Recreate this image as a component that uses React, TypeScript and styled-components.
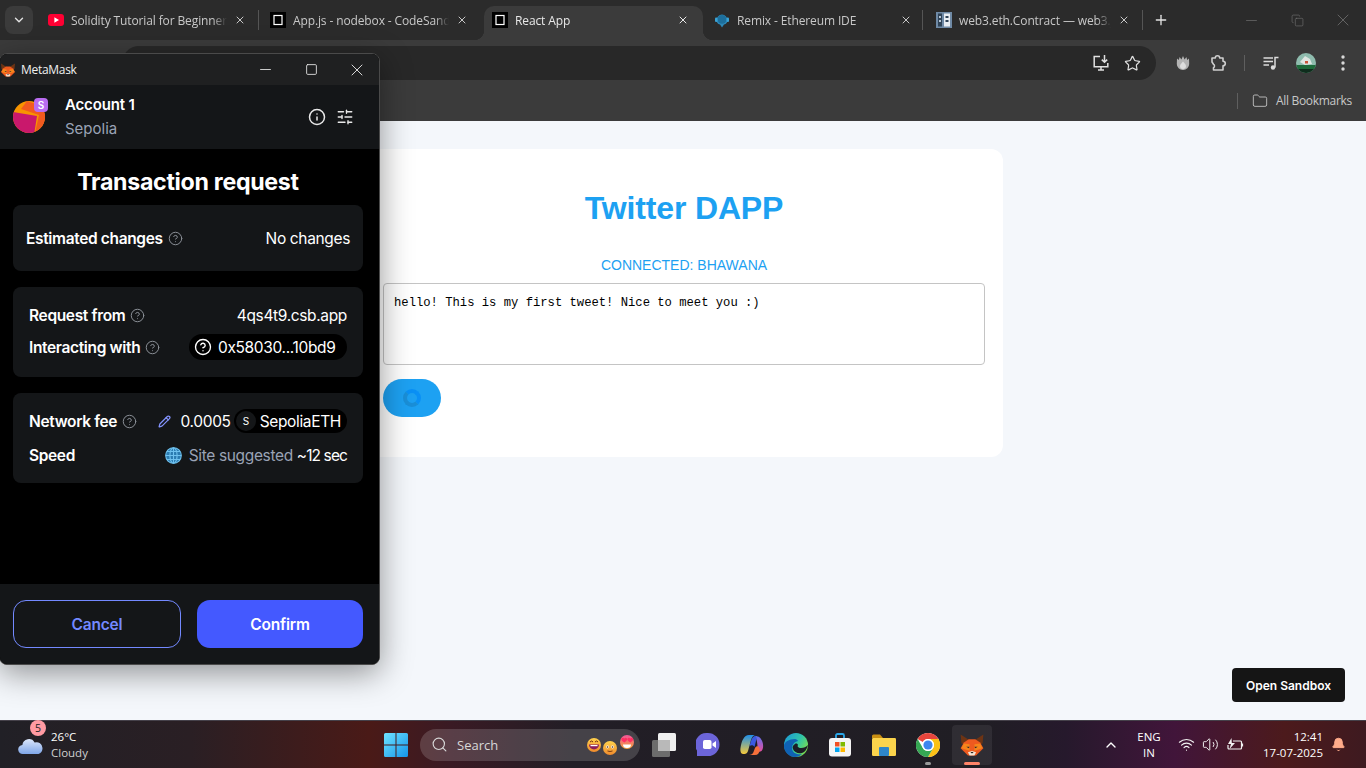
import React from "react";
import styled, { createGlobalStyle } from "styled-components";
import {
  Bell, ChevronDown, ChevronUp, CircleHelp, Copy, Folder, Info, Minus,
  Pencil, Plus, Search, SlidersHorizontal, Square, Star, Volume2, Wifi, X,
} from "lucide-react";

const Global = createGlobalStyle`
  html, body { margin: 0; padding: 0; height: 100%; overflow: hidden; }
  * { box-sizing: border-box; }
`;

const Desktop = styled.div`
  position: relative; width: 1366px; height: 768px; display: flex; flex-direction: column;
  overflow: hidden; font-family: "Open Sans", "Liberation Sans", sans-serif; background: #f4f7fb;
`;

/* ---------- browser chrome ---------- */
const TabStrip = styled.div`
  height: 40px; background: #2b2b2b; display: flex; align-items: flex-end; padding-left: 5px; flex: none;
`;
const TabMenu = styled.div`
  width: 28px; height: 28px; margin: 0 7px 6px 0; border-radius: 8px; background: #3b3b3b; color: #e3e3e3;
  display: flex; align-items: center; justify-content: center;
`;
const Tab = styled.div<{ $active?: boolean; $w?: number; $sep?: number; $ml?: number }>`
  position: relative; height: 34px; width: ${(p) => p.$w ?? 222}px; margin-left: ${(p) => p.$ml ?? 0}px; display: flex; align-items: center;
  gap: 7px; padding: 0 ${(p) => (p.$active ? 14 : 16)}px 6px 8px; font-size: 12px; letter-spacing: -0.12px;
  color: ${(p) => (p.$active ? "#e8e8e8" : "#c8c8c8")};
  background: ${(p) => (p.$active ? "#3b3b3b" : "transparent")};
  border-radius: ${(p) => (p.$active ? "10px 10px 0 0" : "0")};
  &::after {
    content: ""; position: absolute; top: 4px; bottom: 10px; width: 1px; background: #555;
    right: ${(p) => p.$sep ?? 3}px; display: ${(p) => (p.$sep === -1 ? "none" : "block")};
  }
`;
const ActiveFlare = styled.span<{ $side: "left" | "right" }>`
  position: absolute; bottom: 0; width: 10px; height: 10px; ${(p) => p.$side}: -10px;
  background: radial-gradient(circle at ${(p) => (p.$side === "left" ? "0 0" : "100% 0")}, transparent 10px, #3b3b3b 10.5px);
`;
const TabTitle = styled.span`
  flex: 1; min-width: 0; overflow: hidden; white-space: nowrap;
  mask-image: linear-gradient(to right, #000 calc(100% - 14px), transparent);
`;
const PlusButton = styled.div`
  color: #e3e3e3; margin: 0 0 12px 7px; display: flex; width: 16px; height: 16px;
`;
const WindowControls = styled.div`
  margin-left: auto; display: flex; align-self: stretch;
`;
const WindowControl = styled.div`
  width: 46px; display: flex; align-items: center; justify-content: center; color: #6f6f6f;
`;
const Toolbar = styled.div`
  height: 40px; flex: none; background: #3b3b3b; display: flex; align-items: flex-end; padding-left: 122px; color: #dcdcdc;
`;
const AddressBar = styled.div`
  width: 1034px; height: 34px; border-radius: 17px; background: #282828; display: flex; align-items: center;
  justify-content: flex-end; gap: 14px; padding-right: 15px;
`;
const ToolIcon = styled.div<{ $ml?: number; $w?: number }>`
  width: ${(p) => p.$w ?? 18}px; height: 20px; margin-left: ${(p) => p.$ml ?? 0}px; display: flex; align-items: center; justify-content: center;
`;
const ToolbarRest = styled.div`
  display: flex; align-items: center; height: 34px; color: #dcdcdc;
`;
const ToolDivider = styled.div`
  width: 1px; height: 16px; background: #5f5f5f; margin-left: 17px;
`;
const Bookmarks = styled.div`
  height: 41px; flex: none; background: #3b3b3b; display: flex; align-items: center; justify-content: flex-end;
  padding-right: 14px; color: #c8c8c8; font-size: 12px; gap: 8px; letter-spacing: -0.3px;
`;
const BookmarkDivider = styled.div`
  width: 1px; height: 16px; background: #5f5f5f; margin-right: 6px;
`;

/* ---------- page ---------- */
const Page = styled.main`
  position: relative; flex: 1; min-height: 0; background: #f4f7fb; display: flex; flex-direction: column;
  align-items: center; padding: 28px 0 0 2px;
`;
const CardPanel = styled.section`
  width: 638px; height: 308px; background: #fff; border-radius: 12px; padding: 38px 18px 0;
  display: flex; flex-direction: column; align-items: stretch; font-family: "Liberation Sans", Arial, sans-serif;
`;
const Heading = styled.h1`
  margin: 0; text-align: center; color: #1da1f2; font-size: 32px; line-height: 42px; font-weight: 700; letter-spacing: -0.15px;
`;
const Connected = styled.p`
  margin: 28px 0 0; text-align: center; color: #1da1f2; font-size: 14px; line-height: 16px; text-transform: uppercase;
`;
const TweetBox = styled.textarea`
  display: block; width: 602px; height: 82px; margin-top: 10px; border: 1px solid #c4c4c4; border-radius: 4px; padding: 11px 10px; resize: none;
  font: 12.2px/17px "Liberation Mono", monospace; color: #000; background: #fff; outline: none;
`;
const PostButton = styled.div`
  width: 58px; height: 38px; margin-top: 14px; border-radius: 19px; background: #1da1f2; display: flex; align-items: center; justify-content: center;
`;
const Spinner = styled.div`
  width: 18px; height: 18px; border-radius: 50%; border: 4px solid #1a8fd8; border-top-color: #0a90f5; border-right-color: #0a90f5;
`;
const SandboxLink = styled.div`
  position: absolute; right: 21px; bottom: 18px; width: 113px; height: 34px; border-radius: 4px; background: #151515; color: #fff;
  display: flex; align-items: center; justify-content: center; font-size: 12px; font-weight: 600; font-family: "Inter", sans-serif;
`;

/* ---------- MetaMask window ---------- */
const WalletWindow = styled.div`
  position: absolute; left: -1px; top: 53px; width: 381px; height: 612px; border: 1px solid #4a4a4a; border-radius: 8px; overflow: hidden;
  background: #000; display: flex; flex-direction: column; box-shadow: 0 8px 32px rgba(0, 0, 0, 0.42);
  font-family: "Inter", "Liberation Sans", sans-serif; color: #fff; z-index: 5;
`;
const WalletTitleBar = styled.div`
  height: 31px; flex: none; background: #1f2021; display: flex; align-items: center; padding-left: 0; gap: 5px;
  font: 12px "Open Sans", sans-serif; color: #f0f0f0; letter-spacing: -0.3px;
`;
const WalletControls = styled.div`
  margin-left: auto; display: flex; color: #e8e8e8; margin-right: -1px;
`;
const WalletControl = styled.div`
  width: 46px; height: 31px; display: flex; align-items: center; justify-content: center;
`;
const AccountHeader = styled.div`
  height: 64px; flex: none; background: #141618; display: flex; align-items: center; padding: 0 25px 0 13px;
`;
const AvatarWrap = styled.div`
  position: relative; width: 32px; height: 32px; margin-right: 20px;
`;
const NetBadge = styled.div`
  position: absolute; left: 21px; top: -3px; width: 14px; height: 14px; border-radius: 4px; background: #b96cf0; color: #fff;
  font-size: 10px; line-height: 14px; text-align: center; font-weight: 600;
`;
const AccountText = styled.div`
  flex: 1; display: flex; flex-direction: column; gap: 6px;
`;
const AccountName = styled.div`
  font-size: 15px; line-height: 18px; font-weight: 600; letter-spacing: -0.15px;
`;
const AccountNet = styled.div`
  font-size: 15px; line-height: 18px; color: #9aa3b5;
`;
const HeaderIcons = styled.div`
  display: flex; gap: 10px; color: #e8e8e8;
`;
const WalletBody = styled.div`
  flex: 1; background: #000; padding: 8px 16px 0 13px; display: flex; flex-direction: column; gap: 16px;
`;
const WalletTitle = styled.h2`
  margin: 0 0 -8px; height: 40px; font-size: 23.2px; line-height: 50px; font-weight: 700; text-align: center; letter-spacing: -0.3px;
`;
const InfoCard = styled.div<{ $gap?: number; $pad?: number; $h?: number; $center?: boolean }>`
  height: ${(p) => p.$h ?? 90}px; background: #141618; border-radius: 8px; padding: ${(p) => (p.$center ? 0 : 16)}px ${(p) => p.$pad ?? 16}px 0;
  display: flex; flex-direction: column; gap: ${(p) => p.$gap ?? 8}px; justify-content: ${(p) => (p.$center ? "center" : "flex-start")};
`;
const InfoRow = styled.div`
  height: 24px; display: flex; align-items: center; justify-content: space-between; font-size: 15.5px; letter-spacing: -0.35px;
`;
const RowLabel = styled.span`
  display: flex; align-items: center; gap: 5px; font-weight: 600;
`;
const RowValue = styled.span`
  display: flex; align-items: center;
`;
const Muted = styled.span`
  color: #9aa3b5; margin: 0 4px 0 7px;
`;
const Eta = styled.span`
  letter-spacing: -0.9px;
`;
const AddressPill = styled.span`
  height: 26px; width: 158px; border-radius: 13px; background: #000; display: flex; align-items: center; gap: 6px; padding-left: 5px;
`;
const TokenPill = styled.span`
  height: 24px; border-radius: 12px; background: #000; display: flex; align-items: center; gap: 3px; margin-left: 3px; padding: 0 6px 0 2px;
`;
const TokenDot = styled.span`
  width: 20px; height: 20px; border-radius: 50%; background: #141618; font-size: 10px; text-align: center; line-height: 20px; margin-right: 1px;
`;
const PencilWrap = styled.span`
  color: #8494ff; display: flex; margin-right: 10px;
`;
const WalletFooter = styled.div`
  height: 80px; flex: none; background: #141618; padding: 16px 16px 0 13px; display: flex; gap: 16px;
`;
const WalletButton = styled.div<{ $primary?: boolean; $w: number }>`
  width: ${(p) => p.$w}px; height: 48px; border-radius: 13px; display: flex; align-items: center; justify-content: center;
  font-size: 15.5px; font-weight: 600; letter-spacing: -0.2px;
  color: ${(p) => (p.$primary ? "#fff" : "#7389ff")};
  background: ${(p) => (p.$primary ? "#4459ff" : "transparent")};
  border: ${(p) => (p.$primary ? "none" : "1px solid #7389ff")};
`;

/* ---------- taskbar ---------- */
const Taskbar = styled.footer`
  height: 48px; flex: none; display: flex; align-items: center; position: relative; color: #fff; font-size: 11.5px;
  border-top: 1px solid #45414a;
  background: linear-gradient(90deg, #212026 0%, #2a1f24 14%, #4a1a17 27%, #3a1a24 33%, #221e26 42%, #201e24 72%, #26192c 78%, #41153a 86%, #4c1a1c 94%, #3e1a20 100%);
`;
const Weather = styled.div`
  position: relative; width: 384px; flex: none; display: flex; align-items: center; padding-left: 18px; gap: 7px;
`;
const WeatherBadge = styled.div`
  position: absolute; left: 30px; top: -9px; width: 16px; height: 16px; border-radius: 50%; background: #ff9aa2; color: #222;
  font-size: 10.5px; line-height: 16px; text-align: center;
`;
const WeatherText = styled.div`
  display: flex; flex-direction: column; line-height: 16px; font-size: 11.5px;
`;
const CloudyText = styled.span`
  color: #d0d0d0;
`;
const StartCell = styled.div`
  width: 24px; height: 24px; margin-right: 12px; flex: none;
`;
const SearchPill = styled.div`
  position: relative; width: 220px; height: 32px; border-radius: 16px; background: rgba(255, 255, 255, 0.16); display: flex; align-items: center;
  padding-left: 11px; gap: 9px; color: #d8d8d8; font-size: 13px; flex: none;
`;
const EmojiGroup = styled.div`
  position: absolute; right: 3px; top: 4px; width: 50px; height: 24px;
`;
const AppRow = styled.div`
  display: flex; margin-left: 2px;
`;
const AppCell = styled.div<{ $active?: boolean }>`
  position: relative; width: 44px; height: 40px; display: flex; align-items: center; justify-content: center; border-radius: 4px;
  &::before {
    content: ""; position: absolute; inset: 0 2px; border-radius: 4px; background: ${(p) => (p.$active ? "rgba(255,255,255,0.07)" : "transparent")};
  }
`;
const RunDot = styled.span<{ $active?: boolean }>`
  position: absolute; bottom: 0; left: 50%; transform: translateX(-50%); height: 3px; border-radius: 2px;
  width: ${(p) => (p.$active ? 16 : 6)}px; background: ${(p) => (p.$active ? "#ff8469" : "#9a9a9a")};
`;
const Tray = styled.div`
  margin-left: auto; display: flex; align-items: center; padding-right: 20px; height: 100%;
`;
const TrayIcon = styled.div<{ $ml?: number }>`
  margin-left: ${(p) => p.$ml ?? 0}px; display: flex; color: #f2f2f2;
`;
const LangBlock = styled.div`
  width: 32px; margin-left: 14px; text-align: center; font-size: 11.5px; line-height: 16px;
`;
const Clock = styled.div`
  text-align: right; font-size: 11.5px; line-height: 16px; margin-left: 9px; width: 70px;
`;
const BellWrap = styled.div`
  color: #ffab8a; margin-left: 8px; display: flex;
`;

/* ---------- drawings ---------- */
const Fox = ({ size }: { size: number }) => (
  <svg width={size} height={size} viewBox="0 0 32 32" style={{ position: "relative" }}>
    <polygon fill="#6e3414" points="2,3 13,10 8,16 3,14" />
    <polygon fill="#6e3414" points="30,3 19,10 24,16 29,14" />
    <polygon fill="#ee5a1f" points="6,13 12,9 20,9 26,13 30,20 21,29 11,29 2,20" />
    <polygon fill="#f6851b" points="6,14 13,15 13,23 3,20" />
    <polygon fill="#f6851b" points="26,14 19,15 19,23 29,20" />
    <polygon fill="#2a2a30" points="9,18 13,18 12,20" />
    <polygon fill="#2a2a30" points="23,18 19,18 20,20" />
    <polygon fill="#f3e3d3" points="11,25 16,23.5 21,25 19,29 13,29" />
    <polygon fill="#1f1712" points="14,24.5 18,24.5 16,26.5" />
  </svg>
);
const YouTube = () => (
  <svg width="16" height="16" viewBox="0 0 16 16" style={{ flex: "none" }}>
    <rect y="2" width="16" height="12" rx="3" fill="#ff0033" />
    <polygon points="6.4,5.2 11,8 6.4,10.8" fill="#fff" />
  </svg>
);
const SandboxFav = () => (
  <svg width="16" height="16" viewBox="0 0 16 16" style={{ flex: "none" }}>
    <rect width="16" height="16" fill="#000" />
    <rect x="4" y="3.5" width="8" height="9" fill="none" stroke="#fff" strokeWidth="1.2" />
  </svg>
);
const RemixFav = () => (
  <svg width="16" height="16" viewBox="0 0 16 16" style={{ flex: "none" }}>
    <path d="M8 15.5 L6 12.6 C3.6 12 2.6 10.4 2.6 8 A5.4 5.4 0 0 1 13.4 8 C13.4 10.4 12.4 12 10 12.6Z" fill="#2d88b8" />
    <circle cx="8" cy="7.4" r="4.4" fill="#1d6f9c" />
    <rect x="1" y="5.6" width="2.4" height="4.4" rx="1.1" fill="#3aa3d6" />
    <rect x="12.6" y="5.6" width="2.4" height="4.4" rx="1.1" fill="#3aa3d6" />
  </svg>
);
const DocsFav = () => (
  <svg width="16" height="16" viewBox="0 0 16 16" style={{ flex: "none" }}>
    <rect width="16" height="16" fill="#6f8aa6" />
    <rect x="2" y="1.5" width="4" height="13" fill="#2f4357" />
    <rect x="8" y="1.5" width="6" height="13" fill="#e8edf2" />
    <rect x="9.5" y="4" width="3" height="2" fill="#2f4357" />
    <rect x="9.5" y="8" width="3" height="2" fill="#2f4357" />
    <rect x="3" y="4" width="2" height="2" fill="#b9c6d3" />
    <rect x="3" y="8" width="2" height="2" fill="#b9c6d3" />
  </svg>
);
const InstallIcon = () => (
  <svg width="18" height="18" viewBox="0 0 18 18" fill="none" stroke="#e0e0e0" strokeWidth="1.5">
    <path d="M8 2.5H2.2v10.3h13.6V9" />
    <path d="M6 16h6" />
    <path d="M9 12.8V16" />
    <path d="M12.5 1v7M9.8 5.6l2.7 2.7 2.7-2.7" />
  </svg>
);
const FlameIcon = () => (
  <svg width="16" height="16" viewBox="0 0 16 16">
    <path d="M8 1l1.6 3.4L11.4 2l.8 3 1.8-1.6.2 5.6A6 6 0 0 1 8 15a6 6 0 0 1-6.2-6L2 3.4 3.8 5l.8-3L6.400 4.400z" fill="#b4b4b4" />
    <path d="M8 6.500c1 1.600 3 2.500 3 4.800A3 3 0 0 1 8 14a3 3 0 0 1-3-2.700c0-2.300 2-3.200 3-4.800z" fill="#dedede" />
  </svg>
);
const ExtensionIcon = () => (
  <svg width="18" height="18" viewBox="0 0 18 18" fill="none" stroke="#cfcfcf" strokeWidth="1.6" strokeLinejoin="round">
    <path d="M3 4h3.300a2.200 2.200 0 0 1 4.400 0H14v3.200a2.300 2.300 0 0 1 0 4.600V16H4.500v-2.200c1.300-.5 1.300-3.100 0-3.600L3 8z" />
  </svg>
);
const MediaIcon = () => (
  <svg width="18" height="18" viewBox="0 0 18 18" fill="none" stroke="#dcdcdc" strokeWidth="1.5">
    <path d="M1.500 4H11M1.500 7.500H11M1.500 11H7" />
    <path d="M13 13.500V3.500h3.500" />
    <circle cx="11" cy="13.500" r="2.200" fill="#dcdcdc" stroke="none" />
  </svg>
);
const DotsIcon = () => (
  <svg width="6" height="18" viewBox="0 0 6 18" fill="#d8d8d8">
    <circle cx="3" cy="3" r="1.700" />
    <circle cx="3" cy="9" r="1.700" />
    <circle cx="3" cy="15" r="1.700" />
  </svg>
);
const ProfileAvatar = () => (
  <svg width="20" height="20" viewBox="0 0 20 20">
    <defs>
      <clipPath id="pa"><circle cx="10" cy="10" r="10" /></clipPath>
    </defs>
    <g clipPath="url(#pa)">
      <rect width="20" height="20" fill="#8fbcae" />
      <rect y="12" width="20" height="8" fill="#1d6a3a" />
      <polygon points="4,9 9,3 14,6 16,11 9,12" fill="#dfe6e2" />
      <rect x="9" y="8" width="3" height="2.500" fill="#c9533a" />
      <rect y="16" width="20" height="4" fill="#0f2c1d" />
    </g>
  </svg>
);
const MmAvatar = () => (
  <svg width="32" height="32" viewBox="0 0 32 32">
    <defs>
      <clipPath id="ma"><circle cx="16" cy="16" r="16" /></clipPath>
    </defs>
    <g clipPath="url(#ma)">
      <rect width="32" height="32" fill="#f79400" />
      <polygon points="14,0 32,6 32,32 22,32 26,14 8,8" fill="#f15a1f" />
      <polygon points="0,11 24,15 21,34 0,34" fill="#c9186c" />
    </g>
  </svg>
);
const Cloud = () => (
  <svg width="26" height="20" viewBox="0 0 26 20">
    <defs>
      <linearGradient id="cl" x1="0" y1="0" x2="0" y2="1">
        <stop offset="0" stopColor="#dbe6fb" />
        <stop offset="1" stopColor="#7fa6e8" />
      </linearGradient>
    </defs>
    <path d="M5 19a4.500 4.500 0 0 1-.6-9A6.500 6.500 0 0 1 16.600 7.600 5.800 5.800 0 0 1 24.500 13c0 3.600-2 6-5 6z" fill="url(#cl)" />
  </svg>
);
const StartLogo = () => (
  <svg width="24" height="24" viewBox="0 0 24 24">
    <defs>
      <linearGradient id="st" x1="0" y1="0" x2="1" y2="1">
        <stop offset="0" stopColor="#6fe3ff" />
        <stop offset="1" stopColor="#1495ea" />
      </linearGradient>
    </defs>
    <path d="M0 1.500A1.500 1.500 0 0 1 1.500 0h10v11.500H0zM12.500 0h10A1.500 1.500 0 0 1 24 1.500v10H12.500zM0 12.500h11.500V24h-10A1.500 1.500 0 0 1 0 22.500zM12.500 12.500H24v10a1.500 1.500 0 0 1-1.500 1.500h-10z" fill="url(#st)" />
  </svg>
);
const Emojis = () => (
  <svg width="50" height="24" viewBox="0 0 50 24">
    <defs>
      <linearGradient id="em" x1="0" y1="0" x2="0" y2="1">
        <stop offset="0" stopColor="#ffd24d" />
        <stop offset="1" stopColor="#f08a2c" />
      </linearGradient>
      <linearGradient id="em2" x1="0" y1="0" x2="0" y2="1">
        <stop offset="0" stopColor="#f0559a" />
        <stop offset="1" stopColor="#f5a33a" />
      </linearGradient>
    </defs>
    <circle cx="7" cy="12" r="7" fill="url(#em)" />
    <path d="M2 11.500h10a5 5 0 0 1-10 0z" fill="#8a1f5c" />
    <path d="M3.500 12h7v1.200h-7z" fill="#fff" />
    <path d="M3 9q1.700-2 3 0M8 9q1.700-2 3 0" stroke="#6b2a14" fill="none" />
    <circle cx="40" cy="9" r="7" fill="url(#em2)" />
    <path d="M34.500 5.500c1-1 2-.8 2.800 0 .8-.8 1.800-1 2.700 0 .6 1.200-.6 2.600-2.700 4-2.100-1.400-3.400-2.800-2.800-4zM40.500 5.500c1-1 2-.8 2.800 0 .8-.8 1.800-1 2.700 0 .6 1.200-.6 2.600-2.700 4-2.100-1.400-3.400-2.800-2.800-4z" fill="#ff2e63" />
    <path d="M36 11.500h8a4 3.500 0 0 1-8 0z" fill="#fff" />
    <circle cx="23" cy="15" r="7" fill="url(#em)" />
    <circle cx="20.500" cy="14" r="1.400" fill="#fff" />
    <circle cx="25.500" cy="14" r="1.400" fill="#fff" />
    <circle cx="20.500" cy="14" r=".8" fill="#4a2c14" />
    <circle cx="25.500" cy="14" r=".8" fill="#4a2c14" />
    <path d="M20.500 18q2.500 1 5 0" stroke="#7a3a14" fill="none" />
  </svg>
);
const TaskView = () => (
  <svg width="24" height="24" viewBox="0 0 24 24">
    <rect x="6" y="0" width="18" height="18" rx="1.500" fill="#efefef" />
    <rect x="0" y="7" width="18" height="17" rx="1.500" fill="#6c6c6c" />
    <rect x="6" y="7" width="12" height="11" fill="#b9b9b9" />
  </svg>
);
const MeetIcon = () => (
  <svg width="24" height="26" viewBox="0 0 24 26">
    <path d="M12 1a11.500 11.500 0 0 1 0 23H1v-5.400A11.500 11.500 0 0 1 12 1z" fill="#6c65d9" />
    <rect x="7" y="8" width="8.500" height="9" rx="1.800" fill="#fff" />
    <path d="M16.500 11.500 20 9v7l-3.500-2.500z" fill="#fff" />
  </svg>
);
const CopilotIcon = () => (
  <svg width="24" height="24" viewBox="0 0 24 24">
    <defs>
      <linearGradient id="co1" x1="0" y1="0" x2="0" y2="1">
        <stop offset="0" stopColor="#1f8fe8" />
        <stop offset="1" stopColor="#f5c93a" />
      </linearGradient>
      <linearGradient id="co2" x1="0" y1="0" x2="0" y2="1">
        <stop offset="0" stopColor="#5a6ff0" />
        <stop offset="1" stopColor="#e84f9c" />
      </linearGradient>
    </defs>
    <path d="M9 2h7c-3 0-4 2-5 5l-3 11c-.6 2-2 3-3.500 3H3C1 21 0 18 .5 15 1.500 8 4 2 9 2z" fill="url(#co1)" />
    <path d="M15 3c4 0 6 2 7.500 6 1.500 5 0 8-1 9-1 .8-3 .8-4 .5C18 13 17 6 15 3z" fill="url(#co2)" />
    <path d="M9 22h6c3 0 4-2 5-5l-1-3c-1-1-3-1-4 1l-1.500 4C13 21 11 22 9 22z" fill="#f5703a" />
    <path d="M16 3c-3 0-4 2-5 5l-1.500 5c2-1.500 4-1 5 1L16 8c.5-2 1-3.500 0-5z" fill="#3a5ae0" />
  </svg>
);
const EdgeIcon = () => (
  <svg width="24" height="24" viewBox="0 0 24 24">
    <defs>
      <linearGradient id="eg" x1="0" y1="0" x2="1" y2=".6">
        <stop offset="0" stopColor="#1b96dc" />
        <stop offset=".6" stopColor="#2fc4a8" />
        <stop offset="1" stopColor="#78dc52" />
      </linearGradient>
    </defs>
    <circle cx="12" cy="12" r="12" fill="url(#eg)" />
    <path d="M11 6C5 6 0 9 0 13c0 6 5 11 11 11 3 0 5-1 7-3-5 1-10-1-10-6 0-3 2-6 6-7-.5-1-1.500-2-3-2z" fill="#0f62b4" />
    <path d="M11 11c-2 1-3 3-2 5 1 3 5 5 9 4 3-1 5-4 6-8-2 2-4 3-7 3-3 0-4-2-3-3 0-1-2-2-3-1z" fill="#1c1d26" />
  </svg>
);
const StoreIcon = () => (
  <svg width="24" height="24" viewBox="0 0 24 24">
    <path d="M8 5V2.500A1.500 1.500 0 0 1 9.500 1h5A1.500 1.500 0 0 1 16 2.500V5" fill="none" stroke="#2aa7e8" strokeWidth="1.800" />
    <rect x="1" y="5" width="22" height="18.500" rx="3" fill="#f4f4f4" />
    <rect x="7" y="9" width="4.500" height="4.500" fill="#f25022" />
    <rect x="12.500" y="9" width="4.500" height="4.500" fill="#7fba00" />
    <rect x="7" y="14.500" width="4.500" height="4.500" fill="#00a4ef" />
    <rect x="12.500" y="14.500" width="4.500" height="4.500" fill="#ffb900" />
  </svg>
);
const FilesIcon = () => (
  <svg width="24" height="24" viewBox="0 0 24 24">
    <path d="M0 3a1.500 1.500 0 0 1 1.500-1.500h6.500L11 5H0z" fill="#c98f12" />
    <rect x="0" y="5" width="24" height="18" rx="1.200" fill="#fbd44c" />
    <rect x="7" y="14" width="10" height="9" rx="1" fill="#2e86c8" />
  </svg>
);
const ChromeIcon = () => (
  <svg width="24" height="24" viewBox="0 0 24 24">
    <circle cx="12" cy="12" r="12" fill="#fff" />
    <path d="M12 0a12 12 0 0 1 10.400 6H12a6 6 0 0 0-5.200 3L1.600 6A12 12 0 0 1 12 0z" fill="#e8453c" />
    <path d="M22.400 6A12 12 0 0 1 12 24l5.200-9A6 6 0 0 0 12 6z" fill="#fbc116" />
    <path d="M1.600 6l5.200 9a6 6 0 0 0 10.400 0L12 24A12 12 0 0 1 1.600 6z" fill="#35a853" />
    <circle cx="12" cy="12" r="6" fill="#fff" />
    <circle cx="12" cy="12" r="4.600" fill="#3f86ee" />
  </svg>
);
const GlobeIcon = () => (
  <svg width="17" height="17" viewBox="0 0 17 17" fill="none" stroke="#6fc1ee" strokeWidth="1.100">
    <circle cx="8.500" cy="8.500" r="7.800" fill="#2b7bb0" />
    <ellipse cx="8.500" cy="8.500" rx="3.600" ry="7.800" />
    <path d="M.8 8.500h15.400M2 4.500h13M2 12.500h13M8.500.7v15.600" />
  </svg>
);
const BatteryIcon = () => (
  <svg width="18" height="16" viewBox="0 0 18 16" fill="none" stroke="#f2f2f2" strokeWidth="1.200">
    <path d="M7 4h7.500a1 1 0 0 1 1 1v6a1 1 0 0 1-1 1H3a1 1 0 0 1-1-1V8" />
    <path d="M16.500 6.500v3" />
    <path d="M5.500 1 2 7h3l-1.500 5L9 6H5.800z" fill="#f2f2f2" stroke="none" />
  </svg>
);
const Help = () => <CircleHelp size={15} color="#8a8f96" strokeWidth={1.6} />;

export default function App() {
  return (
    <Desktop>
      <Global />
      <TabStrip>
        <TabMenu><ChevronDown size={14} strokeWidth={2.4} /></TabMenu>
        <Tab><YouTube /><TabTitle>Solidity Tutorial for Beginners</TabTitle><X size={12} strokeWidth={2} /></Tab>
        <Tab $sep={-1}><SandboxFav /><TabTitle>App.js - nodebox - CodeSandbox</TabTitle><X size={12} strokeWidth={2} /></Tab>
        <Tab $active $w={219} $sep={-1}>
          <ActiveFlare $side="left" /><SandboxFav /><TabTitle>React App</TabTitle><X size={12} strokeWidth={2} /><ActiveFlare $side="right" />
        </Tab>
        <Tab $w={222} $ml={3} $sep={5}><RemixFav /><TabTitle>Remix - Ethereum IDE</TabTitle><X size={12} strokeWidth={2} /></Tab>
        <Tab $w={218}><DocsFav /><TabTitle>web3.eth.Contract — web3.js</TabTitle><X size={12} strokeWidth={2} /></Tab>
        <PlusButton><Plus size={16} strokeWidth={2} /></PlusButton>
        <WindowControls>
          <WindowControl><Minus size={17} strokeWidth={1} /></WindowControl>
          <WindowControl><Copy size={13} strokeWidth={1.2} /></WindowControl>
          <WindowControl><X size={20} strokeWidth={1} /></WindowControl>
        </WindowControls>
      </TabStrip>
      <Toolbar>
        <AddressBar>
          <InstallIcon />
          <Star size={17} strokeWidth={1.7} color="#e0e0e0" />
        </AddressBar>
        <ToolbarRest>
          <ToolIcon $ml={18}><FlameIcon /></ToolIcon>
          <ToolIcon $ml={17}><ExtensionIcon /></ToolIcon>
          <ToolDivider />
          <ToolIcon $ml={17}><MediaIcon /></ToolIcon>
          <ToolIcon $ml={16} $w={20}><ProfileAvatar /></ToolIcon>
          <ToolIcon $ml={18}><DotsIcon /></ToolIcon>
        </ToolbarRest>
      </Toolbar>
      <Bookmarks>
        <BookmarkDivider />
        <Folder size={16} strokeWidth={1.3} />
        <span>All Bookmarks</span>
      </Bookmarks>
      <Page>
        <CardPanel>
          <Heading>Twitter DAPP</Heading>
          <Connected>Connected: Bhawana</Connected>
          <TweetBox readOnly value="hello! This is my first tweet! Nice to meet you :)" />
          <PostButton><Spinner /></PostButton>
        </CardPanel>
        <SandboxLink>Open Sandbox</SandboxLink>
      </Page>
      <WalletWindow>
        <WalletTitleBar>
          <Fox size={16} />
          <span>MetaMask</span>
          <WalletControls>
            <WalletControl><Minus size={17} strokeWidth={1.2} /></WalletControl>
            <WalletControl><Square size={13} strokeWidth={1.6} /></WalletControl>
            <WalletControl><X size={20} strokeWidth={1.1} /></WalletControl>
          </WalletControls>
        </WalletTitleBar>
        <AccountHeader>
          <AvatarWrap><MmAvatar /><NetBadge>S</NetBadge></AvatarWrap>
          <AccountText>
            <AccountName>Account 1</AccountName>
            <AccountNet>Sepolia</AccountNet>
          </AccountText>
          <HeaderIcons>
            <Info size={18} strokeWidth={2} />
            <SlidersHorizontal size={18} strokeWidth={1.8} />
          </HeaderIcons>
        </AccountHeader>
        <WalletBody>
          <WalletTitle>Transaction request</WalletTitle>
          <InfoCard $h={66} $pad={13} $center>
            <InfoRow>
              <RowLabel>Estimated changes <Help /></RowLabel>
              <RowValue>No changes</RowValue>
            </InfoRow>
          </InfoCard>
          <InfoCard>
            <InfoRow>
              <RowLabel>Request from <Help /></RowLabel>
              <RowValue>4qs4t9.csb.app</RowValue>
            </InfoRow>
            <InfoRow>
              <RowLabel>Interacting with <Help /></RowLabel>
              <AddressPill><CircleHelp size={18} strokeWidth={1.8} />0x58030...10bd9</AddressPill>
            </InfoRow>
          </InfoCard>
          <InfoCard $gap={10}>
            <InfoRow>
              <RowLabel>Network fee <Help /></RowLabel>
              <RowValue>
                <PencilWrap><Pencil size={13} strokeWidth={2.2} /></PencilWrap>
                0.0005
                <TokenPill><TokenDot>S</TokenDot>SepoliaETH</TokenPill>
              </RowValue>
            </InfoRow>
            <InfoRow>
              <RowLabel>Speed</RowLabel>
              <RowValue><GlobeIcon /><Muted>Site suggested</Muted><Eta>~12 sec</Eta></RowValue>
            </InfoRow>
          </InfoCard>
        </WalletBody>
        <WalletFooter>
          <WalletButton $w={168}>Cancel</WalletButton>
          <WalletButton $w={166} $primary>Confirm</WalletButton>
        </WalletFooter>
      </WalletWindow>
      <Taskbar>
        <Weather>
          <Cloud />
          <WeatherBadge>5</WeatherBadge>
          <WeatherText><span>26°C</span><CloudyText>Cloudy</CloudyText></WeatherText>
        </Weather>
        <StartCell><StartLogo /></StartCell>
        <SearchPill>
          <Search size={17} strokeWidth={1.6} />
          <span>Search</span>
          <EmojiGroup><Emojis /></EmojiGroup>
        </SearchPill>
        <AppRow>
          <AppCell><TaskView /></AppCell>
          <AppCell><MeetIcon /></AppCell>
          <AppCell><CopilotIcon /></AppCell>
          <AppCell><EdgeIcon /></AppCell>
          <AppCell><StoreIcon /></AppCell>
          <AppCell><FilesIcon /></AppCell>
          <AppCell><ChromeIcon /><RunDot /></AppCell>
          <AppCell $active><Fox size={26} /><RunDot $active /></AppCell>
        </AppRow>
        <Tray>
          <ChevronUp size={16} strokeWidth={2} />
          <LangBlock>ENG<br />IN</LangBlock>
          <TrayIcon $ml={13}><Wifi size={17} strokeWidth={1.6} /></TrayIcon>
          <TrayIcon $ml={7}><Volume2 size={17} strokeWidth={1.4} /></TrayIcon>
          <TrayIcon $ml={7}><BatteryIcon /></TrayIcon>
          <Clock>12:41<br />17-07-2025</Clock>
          <BellWrap><Bell size={15} fill="#ffab8a" strokeWidth={1.5} /></BellWrap>
        </Tray>
      </Taskbar>
    </Desktop>
  );
}
